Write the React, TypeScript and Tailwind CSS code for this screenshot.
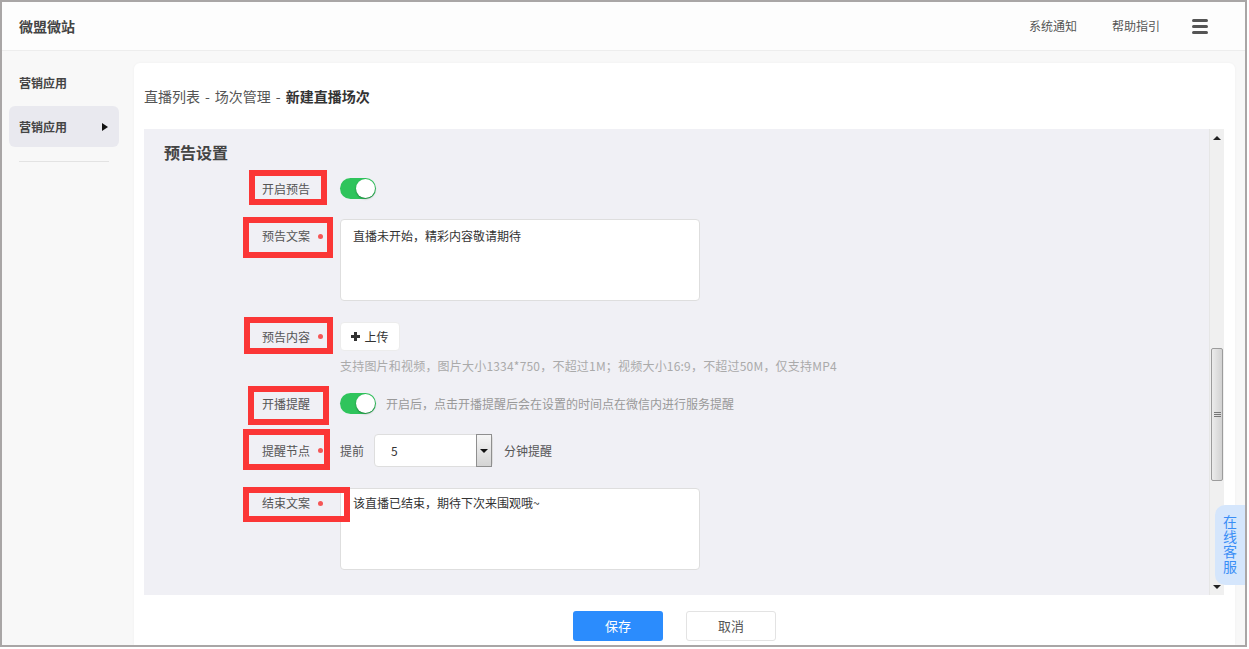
import React from 'react';

const font = "font-['Microsoft_YaHei','Noto_Sans_CJK_SC',sans-serif]";

function Toggle() {
  return (
    <div className="relative w-[36px] h-[21px] rounded-full bg-[#2fc45c] shrink-0">
      <div className="absolute right-[1px] top-[1px] w-[19px] h-[19px] rounded-full bg-white shadow-[0_1px_2px_rgba(0,0,0,0.35)]" />
    </div>
  );
}

// red annotation frame drawn over a label
function Label({ text, dot, box }: { text: string; dot?: boolean; box: string }) {
  return (
    <div className="flex items-center h-[20px] shrink-0">
      <div className="w-[166px] flex justify-end">
        <span className="relative block leading-[20px] text-[12px] text-[#555]">
          {text}
          <span className={`absolute z-10 border-[6px] border-[#fb3636] ${box}`} />
        </span>
      </div>
      <div className="w-[30px] flex items-center">
        {dot && <span className="ml-[8px] w-[5px] h-[5px] rounded-full bg-[#f55656]" />}
      </div>
    </div>
  );
}

function Scrollbar() {
  return (
    <div className="w-[15px] shrink-0 flex flex-col bg-[#f0f0f0] border-l border-[#e6e6e6]">
      <div className="h-[17px] flex items-center justify-center">
        <span className="w-0 h-0 border-x-[4px] border-x-transparent border-b-[4px] border-b-[#222]" />
      </div>
      <div className="h-[202px]" />
      <div className="h-[133px] mx-[1px] border border-[#9c9c9c] rounded-[2px] bg-gradient-to-r from-[#ececec] to-[#d2d2d2] flex flex-col items-center justify-center gap-[1px]">
        <span className="w-[7px] h-[1px] bg-[#777]" />
        <span className="w-[7px] h-[1px] bg-[#777]" />
        <span className="w-[7px] h-[1px] bg-[#777]" />
      </div>
      <div className="flex-1" />
      <div className="h-[17px] flex items-center justify-center">
        <span className="w-0 h-0 border-x-[4px] border-x-transparent border-t-[4px] border-t-[#222]" />
      </div>
    </div>
  );
}

export default function App() {
  return (
    <div className={`w-[1249px] h-[649px] bg-white ${font}`}>
      <div className="relative w-[1247px] h-[647px] border-2 border-[#a9a6a6] flex flex-col bg-[#f8f8f8] overflow-hidden">
        {/* header */}
        <div className="h-[49px] shrink-0 bg-[#fdfdfd] border-b border-[#ededed] flex items-center pl-[17px] pr-[37px]">
          <div className="text-[14px] font-bold text-[#444]">微盟微站</div>
          <div className="ml-auto flex items-center text-[12px] text-[#555]">
            <span>系统通知</span>
            <span className="ml-[35px]">帮助指引</span>
            <div className="ml-[32px] flex flex-col gap-[3px]">
              <span className="w-[16px] h-[3px] rounded-full bg-[#555]" />
              <span className="w-[16px] h-[3px] rounded-full bg-[#555]" />
              <span className="w-[16px] h-[3px] rounded-full bg-[#555]" />
            </div>
          </div>
        </div>

        <div className="flex flex-1 min-h-0">
          {/* sidebar */}
          <div className="w-[132px] shrink-0 flex flex-col text-[12px] font-bold text-[#444]">
            <div className="mt-[22px] pl-[17px] leading-[20px]">营销应用</div>
            <div className="mt-[13px] ml-[7px] w-[110px] h-[41px] rounded-md bg-[#e9e9ef] flex items-center pl-[10px] pr-[11px]">
              <span>营销应用</span>
              <span className="ml-auto w-0 h-0 border-y-[4px] border-y-transparent border-l-[6px] border-l-[#111]" />
            </div>
            <div className="mt-[14px] ml-[17px] w-[90px] h-px bg-[#e3e3e3]" />
          </div>

          {/* main */}
          <div className="flex-1 min-w-0 pt-[12px] pr-[10px] flex">
            <div className="flex-1 bg-white rounded-t-md shadow-[0_0_3px_rgba(0,0,0,0.04)] flex flex-col">
              <div className="pt-[23px] pl-[10px] leading-[20px] text-[14px] text-[#555] flex">
                <span>直播列表</span>
                <span className="mx-[5px]">-</span>
                <span>场次管理</span>
                <span className="mx-[5px]">-</span>
                <span className="font-bold text-[#333]">新建直播场次</span>
              </div>

              <div className="mt-[23px] ml-[10px] mr-[11px] h-[466px] bg-[#f0f0f5] flex">
                <div className="flex-1 min-w-0 overflow-hidden flex flex-col">
                  <div className="pt-[13px] pl-[20px] leading-[20px] text-[16px] font-bold text-[#444]">预告设置</div>

                  <div className="mt-[16px] flex items-center h-[21px]">
                    <Label text="开启预告" box="left-[-13px] top-[-9px] w-[78px] h-[35px]" />
                    <Toggle />
                  </div>

                  <div className="mt-[20px] flex items-start">
                    <div className="pt-[7px]">
                      <Label text="预告文案" dot box="left-[-19px] top-[-9px] w-[90px] h-[41px]" />
                    </div>
                    <textarea
                      readOnly
                      defaultValue="直播未开始，精彩内容敬请期待"
                      className="w-[360px] h-[82px] resize-none rounded-[4px] border border-[#dedede] bg-white pl-[12px] pt-[6px] text-[12px] leading-[20px] text-[#333] outline-none"
                    />
                  </div>

                  <div className="mt-[21px] flex items-center">
                    <Label text="预告内容" dot box="left-[-18px] top-[-10px] w-[89px] h-[37px]" />
                    <div className="w-[60px] h-[29px] rounded-[4px] bg-white border border-[#ececec] flex items-center justify-center gap-[4px] text-[12px] text-[#333]">
                      <svg width="9" height="9" viewBox="0 0 9 9">
                        <rect x="3" y="0" width="3" height="9" fill="#333" />
                        <rect x="0" y="3" width="9" height="3" fill="#333" />
                      </svg>
                      上传
                    </div>
                  </div>
                  <div className="mt-[6px] ml-[196px] leading-[18px] text-[12px] tracking-[0.2px] text-[#aaa] whitespace-nowrap">
                    支持图片和视频，图片大小1334*750，不超过1M；视频大小16:9，不超过50M，仅支持MP4
                  </div>

                  <div className="mt-[18px] flex items-center h-[21px]">
                    <Label text="开播提醒" box="left-[-14px] top-[-8px] w-[81px] h-[39px]" />
                    <Toggle />
                    <span className="ml-[10px] text-[12px] text-[#999]">开启后，点击开播提醒后会在设置的时间点在微信内进行服务提醒</span>
                  </div>

                  <div className="mt-[20px] flex items-center">
                    <Label text="提醒节点" dot box="left-[-19px] top-[-12px] w-[87px] h-[41px]" />
                    <span className="text-[12px] text-[#555]">提前</span>
                    <div className="ml-[10px] w-[119px] h-[33px] rounded-[4px] border border-[#dedede] bg-white flex items-stretch">
                      <span className="flex-1 pl-[16px] flex items-center text-[12px] text-[#333]">5</span>
                      <span className="w-[16px] my-[-1px] border border-[#8f8f8f] bg-gradient-to-b from-[#f6f6f6] to-[#d4d4d4] flex items-center justify-center">
                        <span className="w-0 h-0 border-x-[4px] border-x-transparent border-t-[4px] border-t-[#111]" />
                      </span>
                    </div>
                    <span className="ml-[11px] text-[12px] text-[#555]">分钟提醒</span>
                  </div>

                  <div className="mt-[21px] flex items-start">
                    <div className="pt-[5px]">
                      <Label text="结束文案" dot box="left-[-19px] top-[-6px] w-[107px] h-[35px]" />
                    </div>
                    <textarea
                      readOnly
                      defaultValue="该直播已结束，期待下次来围观哦~"
                      className="w-[360px] h-[82px] resize-none rounded-[4px] border border-[#dedede] bg-white pl-[12px] pt-[4px] text-[12px] leading-[20px] text-[#333] outline-none"
                    />
                  </div>
                </div>
                <Scrollbar />
              </div>

              <div className="flex-1 flex justify-center items-start pt-[16px] pr-[20px] gap-[23px]">
                <button className="w-[90px] h-[30px] rounded-[3px] bg-[#2b8cfd] text-white text-[13px]">保存</button>
                <button className="w-[90px] h-[30px] rounded-[3px] bg-white border border-[#e3e3e3] text-[#555] text-[13px]">取消</button>
              </div>
            </div>
          </div>
        </div>

        {/* floating service tab */}
        <div className="absolute right-0 top-[503px] w-[30px] h-[80px] rounded-l-[10px] bg-[#d5e6fc] flex items-center justify-center">
          <span className="[writing-mode:vertical-rl] text-[14px] tracking-[1px] leading-[16px] text-[#3a8ef6]">在线客服</span>
        </div>
      </div>
    </div>
  );
}
